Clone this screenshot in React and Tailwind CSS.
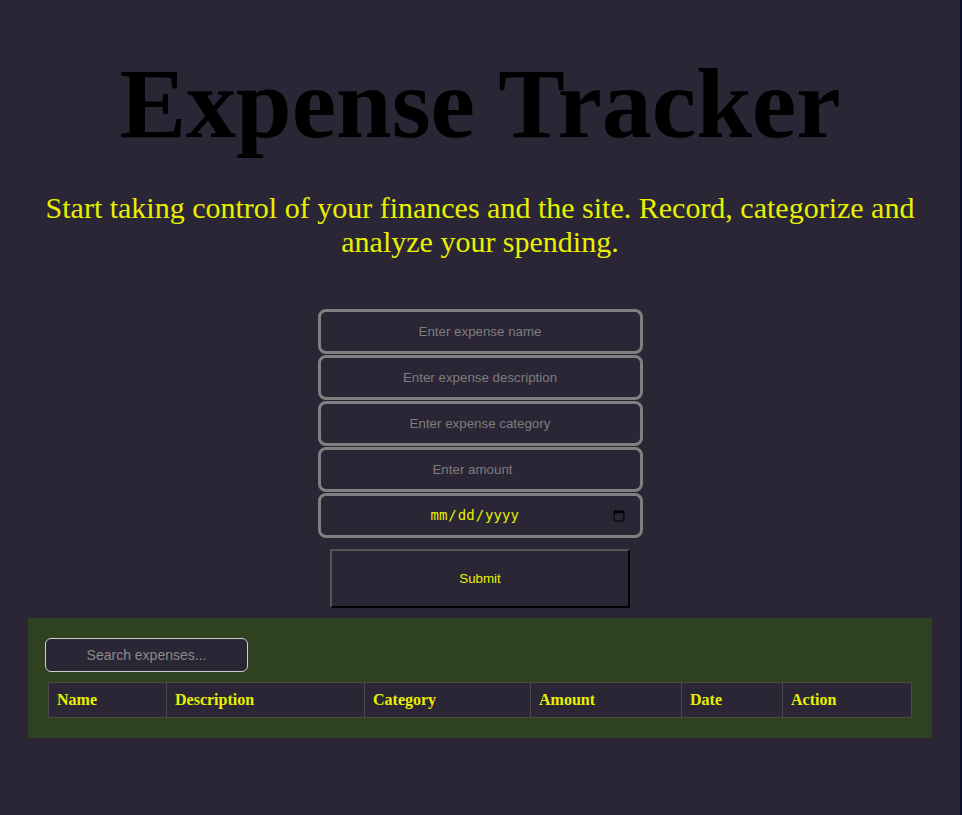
const columns = ["Name", "Description", "Category", "Amount", "Date", "Action"];
const colWidths = ["w-[118px]", "w-[198px]", "w-[166px]", "w-[151px]", "w-[101px]", "w-[129px]"];

const fields = [
  { type: "text", placeholder: "Enter expense name" },
  { type: "text", placeholder: "Enter expense description" },
  { type: "text", placeholder: "Enter expense category" },
  { type: "number", placeholder: "Enter amount" },
];

const App = () => {
  return (
    <div className="flex min-h-screen bg-[#0e0d26]">
      <div className="w-[960px] min-h-[815px] bg-[#2a2635] font-['Liberation_Serif',serif]">
        <h1 className="pt-[46px] text-center text-[100px] leading-[115px] font-bold text-black">
          Expense Tracker
        </h1>

        <p className="mt-[30px] px-4 text-center text-[30px] leading-[34px] text-[#e8f000]">
          Start taking control of your finances and the site. Record, categorize and
          analyze your spending.
        </p>

        <form
          className="mt-[50px] flex flex-col items-center gap-px"
          onSubmit={(e) => e.preventDefault()}
        >
          {fields.map((field) => (
            <input
              key={field.placeholder}
              type={field.type}
              placeholder={field.placeholder}
              className="w-[325px] h-[45px] rounded-[8px] border-[3px] border-[#808080] bg-[#2a2635] text-center text-[13.33px] text-[#e8f000] font-['Liberation_Sans',sans-serif] placeholder:text-[#7d7d7d] outline-none [appearance:textfield]"
            />
          ))}
          <input
            type="date"
            className="w-[325px] h-[45px] rounded-[8px] border-[3px] border-[#808080] bg-[#2a2635] pl-[109px] pr-[12px] text-[14px] text-[#e8f000] font-['DejaVu_Sans_Mono',monospace] outline-none"
          />
          <button
            type="submit"
            className="mt-[10px] w-[300px] h-[59px] border-2 border-t-[#555] border-l-[#555] border-b-black border-r-black bg-[#2a2635] text-[13.33px] text-[#e8f000] font-['Liberation_Sans',sans-serif]"
          >
            Submit
          </button>
        </form>

        <section className="mx-[28px] mt-[10px] bg-[#2f421f] pt-[20px] pb-[20px] pl-[17px] pr-[20px]">
          <input
            type="text"
            placeholder="Search expenses..."
            className="block w-[203px] h-[34px] rounded-[6px] border border-[#cccccc] bg-[#2a2635] text-center text-[14px] text-[#e8f000] font-['Liberation_Sans',sans-serif] placeholder:text-[#8a8a8a] outline-none"
          />
          <table className="mt-[10px] ml-[3px] w-[864px] border-collapse bg-[#2a2635]">
            <thead>
              <tr>
                {columns.map((col, i) => (
                  <th
                    key={col}
                    className={`${colWidths[i]} h-[35px] border border-[#4a4a4a] px-[8px] text-left text-[16px] font-bold text-[#e8f000]`}
                  >
                    {col}
                  </th>
                ))}
              </tr>
            </thead>
            <tbody></tbody>
          </table>
        </section>
      </div>
    </div>
  );
};

export default App;
